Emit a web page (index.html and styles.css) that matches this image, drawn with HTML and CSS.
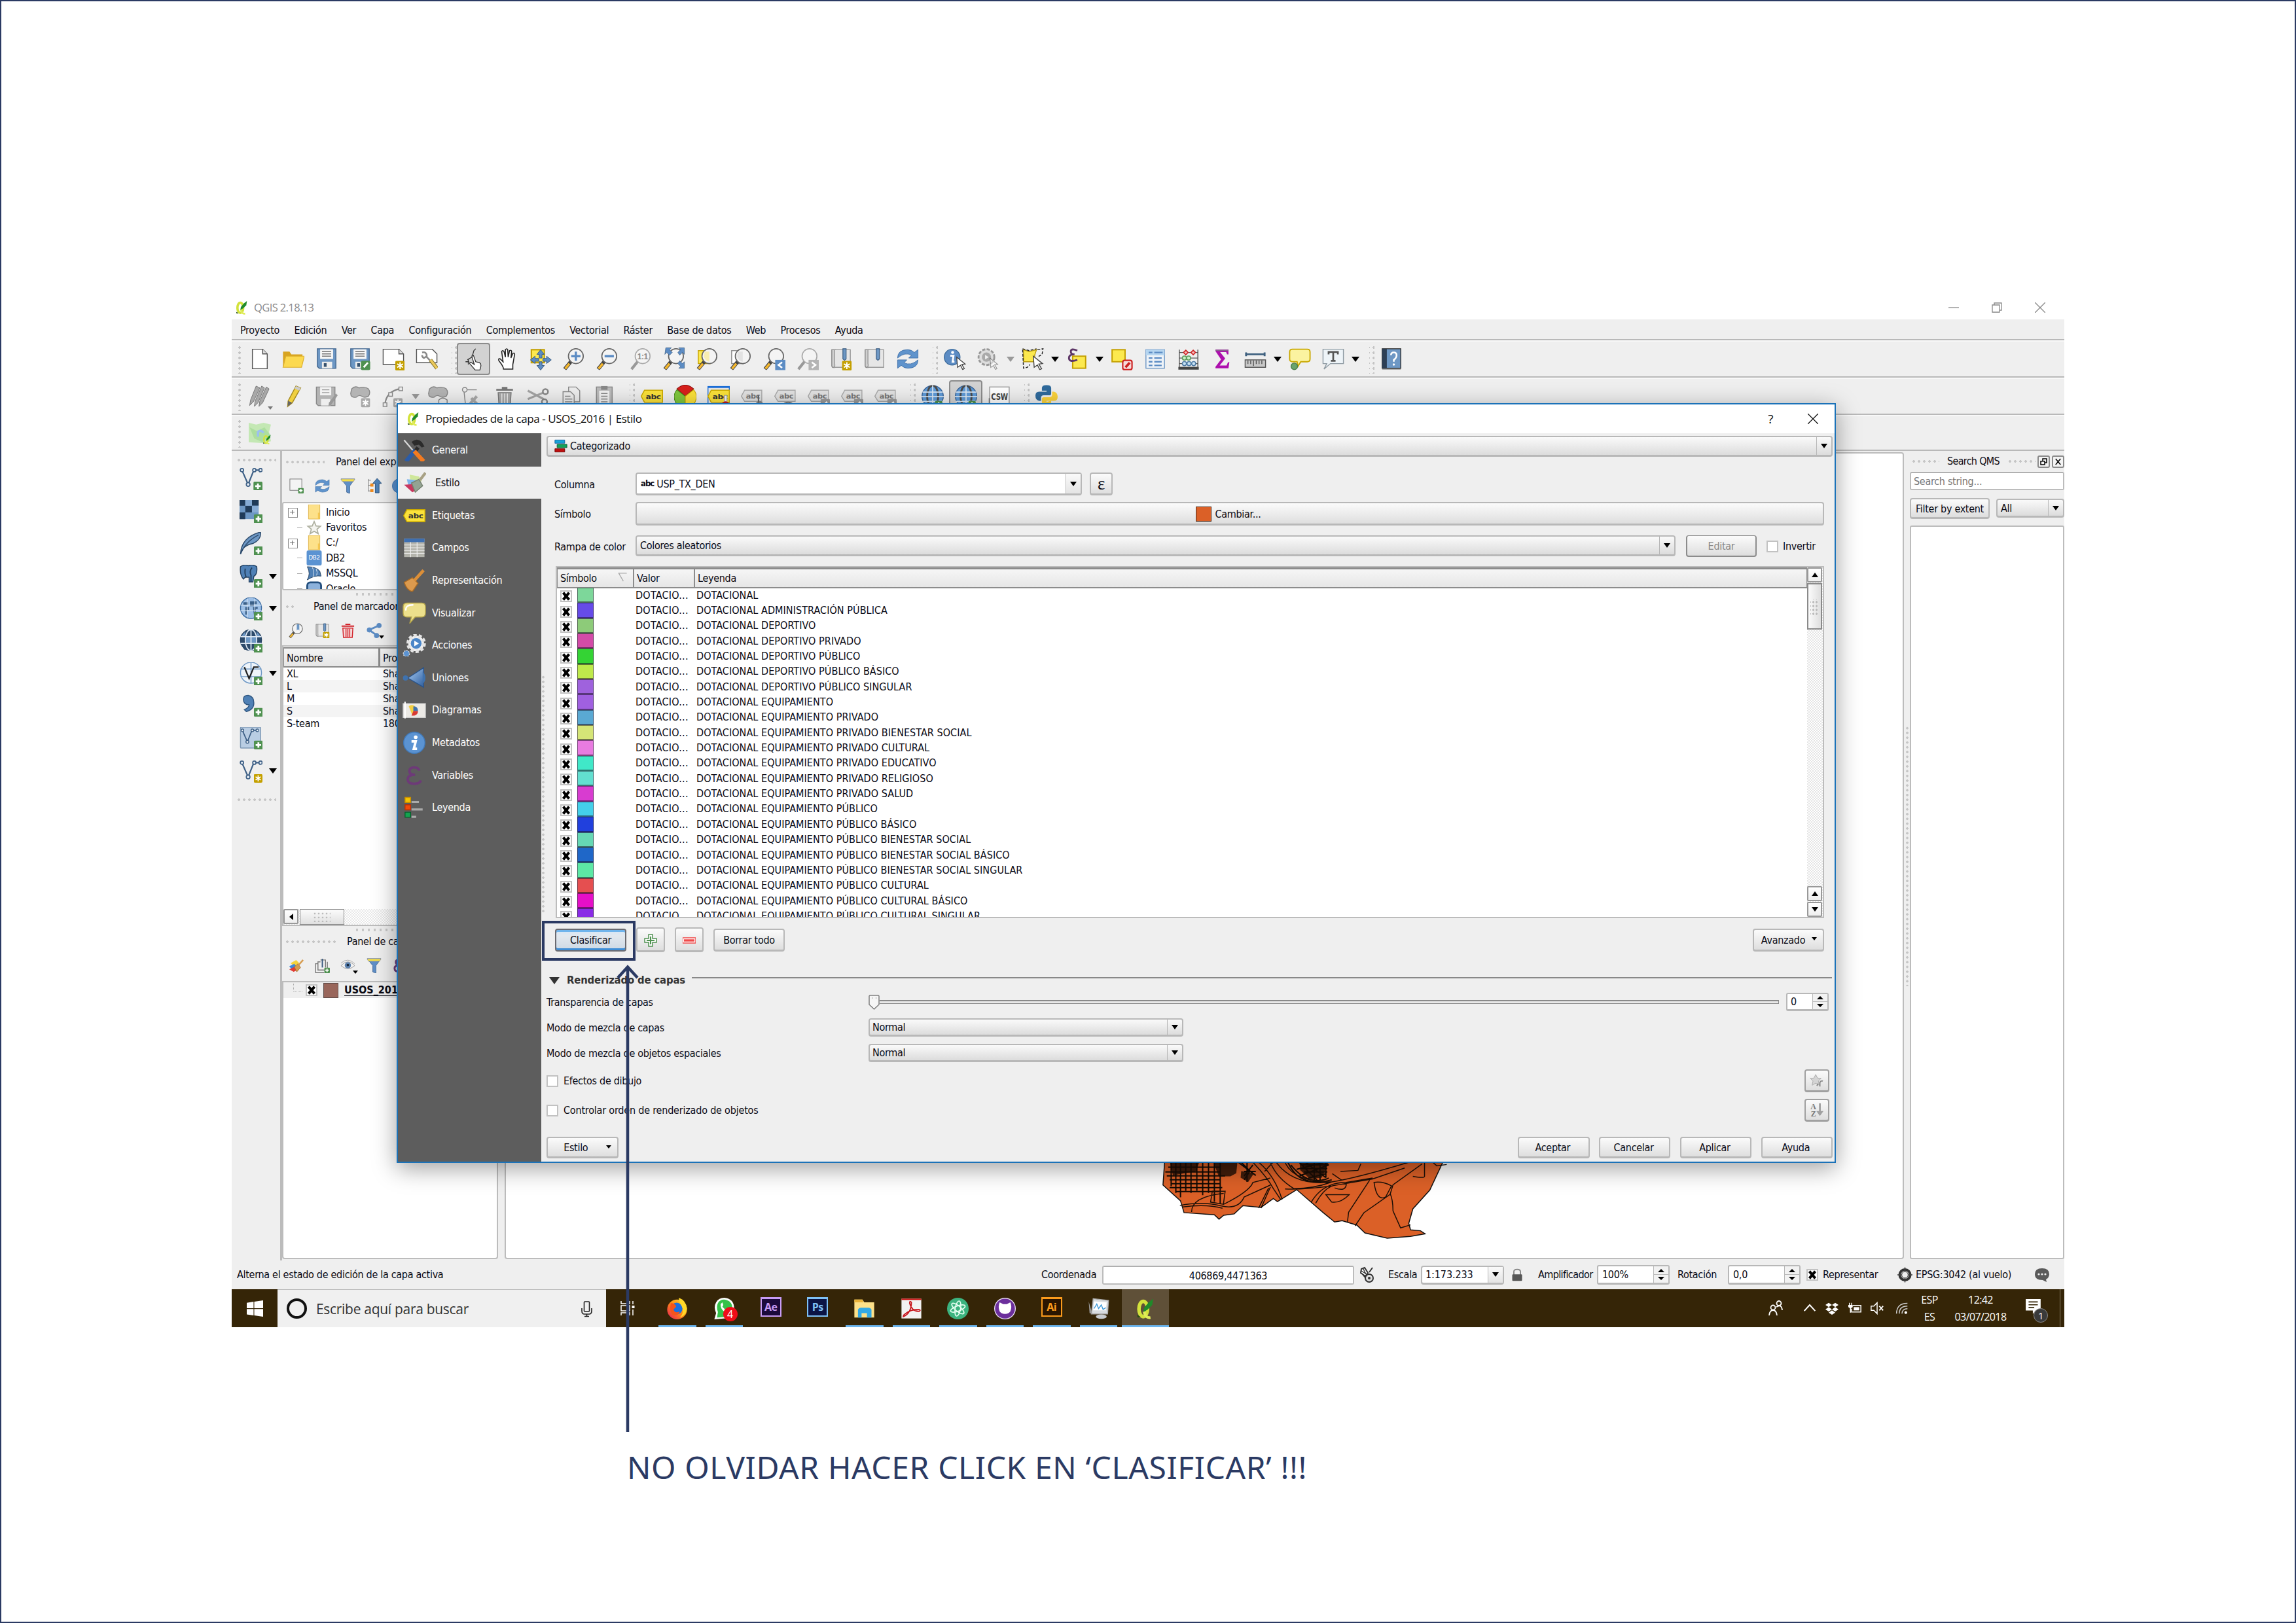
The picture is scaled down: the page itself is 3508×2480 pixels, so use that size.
FILE: index.html
```html
<!DOCTYPE html>
<html lang="es">
<head>
<meta charset="utf-8">
<title>QGIS 2.18.13</title>
<link rel="stylesheet" href="styles.css">
</head>
<body>
<svg class="defs" aria-hidden="true">
  <defs>
    <linearGradient id="g-blue" x1="0" y1="0" x2="1" y2="1"><stop offset="0" stop-color="#a9cdf5"/><stop offset="1" stop-color="#2f5f9e"/></linearGradient>
    <linearGradient id="g-fox" x1="1" y1="0" x2="0" y2="1"><stop offset="0" stop-color="#ffe32b"/><stop offset=".5" stop-color="#ff8a16"/><stop offset="1" stop-color="#e8175d"/></linearGradient>
  </defs>
  <symbol id="plus" viewBox="0 0 10 10"><rect width="10" height="10" rx="1.5" fill="#4f9150"/><path d="M5 2v6M2 5h6" stroke="#fff" stroke-width="2"/></symbol>
  <symbol id="star" viewBox="0 0 10 10"><rect width="10" height="10" rx="1.5" fill="#c4a000"/><path d="M5 1.5v7M2 3.2l6 3.6M8 3.2L2 6.8" stroke="#fff" stroke-width="1.3"/></symbol>
  <symbol id="gstar" viewBox="0 0 10 10"><rect width="10" height="10" rx="1.5" fill="#a8a8a8"/><path d="M5 1.5v7M2 3.2l6 3.6M8 3.2L2 6.8" stroke="#fff" stroke-width="1.3"/></symbol>
  <symbol id="qgis" viewBox="0 0 24 24"><ellipse cx="10" cy="12.500" rx="4.800" ry="8.500" fill="none" stroke="#d3e23c" stroke-width="4"/><path d="M11 15q1 8 7 7" fill="none" stroke="#e0ec5a" stroke-width="3"/><path d="M10 16l1-5 5-6 5-4-1 7-5 5z" fill="#1f8a2a"/><path d="M3 19l4 2-3 1z" fill="#234d10"/></symbol>
  <symbol id="new" viewBox="0 0 24 24"><path d="M4 1.5h11l5 5v16H4z" fill="#fff" stroke="#555"/><path d="M15 1.5v5h5" fill="#ddd" stroke="#555"/></symbol>
  <symbol id="open" viewBox="0 0 24 24"><path d="M1 21V4h7l2 3h12v3" fill="#d8a420"/><path d="M1 21L4 9h20l-3 12z" fill="#fcd94f" stroke="#dcae2b" stroke-width=".8"/></symbol>
  <symbol id="save" viewBox="0 0 24 24"><path d="M2 1h20v21H4l-2-2z" fill="#6d97c4" stroke="#466a92"/><path d="M5 1.5h14V12H5z" fill="#f7f7f7"/><path d="M7 4h10M7 6.5h10M7 9h10" stroke="#777"/><path d="M7 15h11v7H7z" fill="#eee"/><path d="M9 16.500h3v4H9z" fill="#36526f"/></symbol>
  <symbol id="saveas" viewBox="0 0 24 24"><use href="#save"/><rect x="13" y="14" width="10" height="10" rx="1.5" fill="#4f9150"/><path d="M16 21l4.500-5" stroke="#fff" stroke-width="2"/></symbol>
  <symbol id="composer" viewBox="0 0 24 24"><path d="M1 1.5h17l5 5V18H1z" fill="#fff" stroke="#555"/><path d="M18 1.5v5h5" fill="#ddd" stroke="#555"/><use href="#star" x="14" y="14" width="10.5" height="10.5"/></symbol>
  <symbol id="manager" viewBox="0 0 24 24"><path d="M1 1.5h17l5 5V16H1z" fill="#fff" stroke="#555"/><path d="M7 5q5-1 5 4l-3 2q-2-1-2-3M12 10l4 4" fill="none" stroke="#888" stroke-width="1.8"/><path d="M16 13l7 9" stroke="#8a7a30" stroke-width="4"/><path d="M16 13l7 9" stroke="#ecc95a" stroke-width="2.5"/></symbol>
  <symbol id="touch" viewBox="0 0 24 24"><path d="M10 9q0-2 1.500-1l2.500 7 4 1q2 1 1.500 4l-1 4h-5l-6-7q0-2 2-1l3 2-2.500-8z" fill="#fff" stroke="#333" stroke-width=".9"/><path d="M5 13l5-3 2-7 2-2M3 15h4M6 12v6" fill="none" stroke="#333" stroke-width=".9"/></symbol>
  <symbol id="hand" viewBox="0 0 24 24"><path d="M8 23q0-3-5-9-1-3 1.500-2l3 3L6 4q1-2 2.500 0l1.500 6V2q1.500-2 2.500 0l.5 8 1.500-7q2-1 2.200 1L16 11l2-5q2-1 2 1l-2 11v5z" fill="#fff" stroke="#222" stroke-width="1.1"/></symbol>
  <symbol id="pansel" viewBox="0 0 24 24"><rect x="2" y="2" width="14" height="14" fill="#fce94f" stroke="#c4a000" stroke-width="1.5"/><path d="M12 2l4 5h-2.500v4h-3V7H8zM12 24l4-5h-2.500v-4h-3v4H8zM1 13l5-4v2.500h4v3H6V17zM23.500 13l-5-4v2.500h-4v3h4V17z" fill="#5c8cc4" stroke="#37597f" stroke-width=".7"/></symbol>
  <symbol id="lens" viewBox="0 0 24 24"><path d="M8.500 15L2 23" stroke="#444" stroke-width="4"/><path d="M7 17l-4.500 5.500" stroke="#f5b82e" stroke-width="2.500"/><circle cx="14" cy="9" r="8" fill="#f4f4f4" stroke="#666" stroke-width="1.2"/></symbol>
  <symbol id="glens" viewBox="0 0 24 24"><path d="M8.500 15L2 23" stroke="#999" stroke-width="3"/><circle cx="14" cy="9" r="8" fill="#f4f4f4" stroke="#aaa" stroke-width="1.2"/></symbol>
  <symbol id="zin" viewBox="0 0 24 24"><use href="#lens"/><path d="M14 4v10M9 9h10" stroke="#5c8cc4" stroke-width="2.4"/></symbol>
  <symbol id="zout" viewBox="0 0 24 24"><use href="#lens"/><path d="M9 9h10" stroke="#5c8cc4" stroke-width="2.6"/></symbol>
  <symbol id="z11" viewBox="0 0 24 24"><use href="#glens"/><text x="14" y="12" font-size="8.5" text-anchor="middle" font-weight="bold" fill="#888" font-family="Liberation Sans, sans-serif">1:1</text></symbol>
  <symbol id="zfull" viewBox="0 0 24 24"><use href="#lens"/><path d="M3 0h6L7 2l3 3-3 3-3-3-2 2zM23 0v7l-2-2-3 3-2-3 3-3-2-2zM23 22v-7l-2 2-3-3-2 3 3 3-2 2z" fill="#5c8cc4" stroke="#37597f" stroke-width=".5"/></symbol>
  <symbol id="zsel" viewBox="0 0 24 24"><rect x="2" y="3" width="13" height="14" fill="#fce94f" stroke="#c4a000"/><use href="#lens"/><path d="M9 4h5v11q-5-1-6-6z" fill="#f7edb0"/></symbol>
  <symbol id="zlay" viewBox="0 0 24 24"><rect x="2" y="3" width="13" height="14" fill="#fff" stroke="#888"/><use href="#lens"/><path d="M9 4h5v11q-5-1-6-6z" fill="#e2e2e2"/></symbol>
  <symbol id="zlast" viewBox="0 0 24 24"><use href="#lens"/><rect x="13" y="13" width="11" height="11" fill="#5c8cc4"/><path d="M20.500 15.500l-4 3 4 3" fill="none" stroke="#fff" stroke-width="1.8"/></symbol>
  <symbol id="znext" viewBox="0 0 24 24"><use href="#glens"/><rect x="13" y="13" width="11" height="11" fill="#b4b4b4"/><path d="M16.500 15.500l4 3-4 3" fill="none" stroke="#fff" stroke-width="1.8"/></symbol>
  <symbol id="book" viewBox="0 0 24 24"><path d="M2 2h4v19q-4 1-4-2z" fill="#d0d0d0" stroke="#888"/><path d="M5 2h17v19H4q2-1 1-4z" fill="#e6e6e6" stroke="#999"/><path d="M14 1h3.500v11l-1.700 1.500L14 12z" fill="#6d97c4" stroke="#37597f" stroke-width=".8"/></symbol>
  <symbol id="booknew" viewBox="0 0 24 24"><use href="#book"/><use href="#star" x="13" y="14" width="10.5" height="10.5"/></symbol>
  <symbol id="refresh" viewBox="0 0 24 24"><path d="M1 11q0-9 11-9 4 0 7 3l4-3v9H13l3-3q-7-4-15 3zM23 13q0 9-11 9-4 0-7-3l-4 3v-9h10l-3 3q7 4 15-3z" fill="#5f93cc" stroke="#3a6ca5" stroke-width=".6"/></symbol>
  <symbol id="cursor" viewBox="0 0 12 16"><path d="M1 1l10 8-4 .5 3 5-2 1-2.500-5L2 13z" fill="#fff" stroke="#444"/></symbol>
  <symbol id="ident" viewBox="0 0 24 24"><circle cx="9" cy="10" r="8.5" fill="#5c8cc4" stroke="#42709f"/><circle cx="9.5" cy="5" r="1.6" fill="#fff"/><path d="M7 8.500h3.500l-1 6.500h2" fill="none" stroke="#fff" stroke-width="2"/><use href="#cursor" x="13" y="9" width="11" height="15"/></symbol>
  <symbol id="ggear" viewBox="0 0 24 24"><circle cx="10" cy="10" r="8.5" fill="#ddd" stroke="#999" stroke-width="2" stroke-dasharray="3.5 1.5"/><circle cx="10" cy="10" r="5" fill="#aaa"/><path d="M8.500 7.500l4 2.500-4 2.500z" fill="#eee"/><use href="#cursor" x="13" y="10" width="10" height="14" opacity=".5"/></symbol>
  <symbol id="select" viewBox="0 0 24 24"><path d="M2 2l6 2 8-2-2 6v7H2z" fill="#fce94f" stroke="#b89a10"/><path d="M1 1l7 2 8-2M17 2l6-1-1 6-5 3M1 2l1 20 4-1 3-3" fill="none" stroke="#222" stroke-dasharray="3 1.5"/><use href="#cursor" x="11" y="8" width="13" height="16"/></symbol>
  <symbol id="epssel" viewBox="0 0 24 24"><rect x="7" y="9" width="14" height="13" fill="#fce94f" stroke="#c4a000" stroke-width="1.4"/><path d="M12 3Q5 0 5 4q0 3 4 3-6 0-6 4 0 5 9 2" fill="none" stroke="#5c3566" stroke-width="2"/></symbol>
  <symbol id="desel" viewBox="0 0 24 24"><rect x="1.5" y="2" width="14" height="13" fill="#fce94f" stroke="#c4a000" stroke-width="1.4"/><rect x="13" y="13.5" width="10" height="10" rx="2" fill="#f6dada" stroke="#cc2020" stroke-width="1.5"/><path d="M16 21l4.500-5" stroke="#cc2020" stroke-width="2.6"/></symbol>
  <symbol id="attr" viewBox="0 0 24 24"><rect x="2" y="2" width="20" height="20" fill="#eef3f8" stroke="#6d97c4"/><path d="M2 2h20v6H2z" fill="#b5d5f0"/><path d="M5 5h4M11 5h9M5 11h4M11 11h8M5 15h4M11 15h8M5 19h4M11 19h8" stroke="#5c8cc4" stroke-width="1.6"/></symbol>
  <symbol id="abacus" viewBox="0 0 24 24"><path d="M2 22V2M22 22V2M2 5h20M2 11h20M2 17h20" stroke="#555" fill="none"/><path d="M1 22h22" stroke="#444" stroke-width="3"/><g stroke-width="1.1"><path d="M9 2.500l2.500 2.500L9 7.500 6.500 5zM17 2.500l2.500 2.500-2.500 2.500L14.500 5z" fill="#f6b8b8" stroke="#c22"/><g fill="#c8f0c8" stroke="#5a9a5a"><circle cx="7.5" cy="11" r="2.2"/><circle cx="12" cy="11" r="2.2"/></g><g fill="#c8e2f4" stroke="#4f7ba5"><circle cx="7.5" cy="17" r="2.2"/><circle cx="12.5" cy="17" r="2.2"/><circle cx="17.5" cy="17" r="2.2"/></g></g></symbol>
  <symbol id="sigma" viewBox="0 0 24 24"><path d="M5 2h14v5h-1.500l-1-2.500H10l5.500 7L9.500 19H17l1.500-3.500H20L19 22H5v-1.500l6-8-6-9z" fill="#ad0fad"/><path d="M5 2h14v1.500H5z" fill="#8b5f91"/></symbol>
  <symbol id="measure" viewBox="0 0 24 24"><path d="M2 5v4M22 5v4M2 7h20" stroke="#3e607f" stroke-width="2"/><rect x="1" y="13" width="22" height="8" fill="#c8c8c8" stroke="#555"/><path d="M4 13.500v4M7 13.500v4M10 13.500v6M13 13.500v4M16 13.500v4M19 13.500v4" stroke="#555"/></symbol>
  <symbol id="tip" viewBox="0 0 24 24"><path d="M4 1.500h16q3 0 3 3V12q0 3-3 3h-7l-3 5-1-5H4q-3 0-3-3V4.500q0-3 3-3z" fill="#fbf3a0" stroke="#c9a800" stroke-width="1.3"/><circle cx="6" cy="20" r="3.5" fill="#6ba36c" stroke="#4a7d4b"/></symbol>
  <symbol id="textann" viewBox="0 0 24 24"><path d="M1 1.500h22V17H9l-7 6 3-6H1z" fill="#eef4f8" stroke="#8f9ba3"/><path d="M7 7V4.500h10V7M12 4.500V14M9.500 14h5" fill="none" stroke="#555" stroke-width="1.9"/></symbol>
  <symbol id="help" viewBox="0 0 24 24"><path d="M2 22h20v1.500H2z" fill="#999"/><rect x="2" y="1" width="20" height="21" fill="#6d97c4" stroke="#333"/><path d="M2 1h5v21H2z" fill="#2d3f55"/><path d="M11.500 8q0-3 3-3t3 3-3 5v2" fill="none" stroke="#fff" stroke-width="1.8"/><circle cx="14.5" cy="18" r="1.2" fill="#fff"/></symbol>

  <symbol id="pencils" viewBox="0 0 24 24"><path d="M8 1L2 16l-1 6 4-4 7-15zM14 1L7 17l-1 6 4-4 7-16zM19 2l-7 15-1 6 4-4 7-15z" fill="#a8a8a8" stroke="#777" stroke-width=".7"/></symbol>
  <symbol id="pencil" viewBox="0 0 24 24"><path d="M15 1l5 2-9 16-5 4 .5-6z" fill="#f0d040" stroke="#a58a20"/><path d="M15 1l5 2-1.500 3-5-2.500z" fill="#ccc"/><path d="M6.500 17l4.500 2-5 4z" fill="#666"/></symbol>
  <symbol id="gsave" viewBox="0 0 24 24"><path d="M1 2h20v20H3l-2-2z" fill="#b4b4b4" stroke="#888"/><path d="M5 2h12v9H5z" fill="#f2f2f2"/><path d="M7 5h8M7 8h8" stroke="#999"/><path d="M6 15h10v7H6z" fill="#eee"/><path d="M22 9l2 2-7 10-3 2 .5-4z" fill="#999"/></symbol>
  <symbol id="gpoly" viewBox="0 0 24 24"><path d="M3 4q4-4 8-1 6-2 10 1 3 4 0 8-4 2-7 0-3-2-6 1Q2 14 2 9z" fill="#b4b4b4" stroke="#888"/><use href="#gstar" x="13" y="14" width="10" height="10"/></symbol>
  <symbol id="gnode" viewBox="0 0 24 24"><path d="M3 21Q4 7 19 4" fill="none" stroke="#888" stroke-width="1.5"/><path d="M1 19h4v4H1zM7 8h4v4H7zM18 2h4v4h-4z" fill="#eee" stroke="#888"/><use href="#gstar" x="12" y="14" width="10" height="10"/></symbol>
  <symbol id="gmove" viewBox="0 0 24 24"><path d="M3 4q4-4 8-1 6-2 10 1 3 4 0 8-4 2-7 0-3-2-6 1Q2 14 2 9z" fill="#b4b4b4" stroke="#888"/><path d="M13 23v-7q4-4 9 0v7z" fill="#eee" stroke="#888"/></symbol>
  <symbol id="gedit" viewBox="0 0 24 24"><path d="M4 5l2 18M6 5h12" stroke="#888" fill="none"/><circle cx="5" cy="5" r="2.5" fill="#eee" stroke="#888"/><path d="M9 22l9-10M12 14l8 8" stroke="#aaa" stroke-width="3"/></symbol>
  <symbol id="gtrash" viewBox="0 0 24 24"><path d="M3 5h18M9 3h6" stroke="#777" stroke-width="2"/><path d="M5 8h14l-1 15H6z" fill="#aaa" stroke="#777"/><path d="M9 9v13M12 9v13M15 9v13" stroke="#eee"/></symbol>
  <symbol id="gcut" viewBox="0 0 24 24"><path d="M1 6l17 9M1 15l17-7" stroke="#a4a4a4" stroke-width="2.2"/><circle cx="20" cy="7" r="2.8" fill="none" stroke="#888" stroke-width="1.8"/><circle cx="19" cy="18" r="2.8" fill="none" stroke="#888" stroke-width="1.8"/></symbol>
  <symbol id="gcopy" viewBox="0 0 24 24"><path d="M9 2h8l4 4v12H9z" fill="#eee" stroke="#888"/><path d="M3 7h8l4 4v12H3z" fill="#eee" stroke="#888"/><path d="M5 12h6M5 15h8M5 18h8M5 21h8" stroke="#888"/></symbol>
  <symbol id="gpaste" viewBox="0 0 24 24"><rect x="3" y="2" width="17" height="21" fill="#bbb" stroke="#888"/><path d="M6 6h11v15H6z" fill="#f2f2f2"/><path d="M8 1h7v4H8z" fill="#888"/><path d="M8 9h7M8 12h7M8 15h7M8 18h7" stroke="#888"/></symbol>
  <symbol id="tag" viewBox="0 0 24 24"><path d="M4 5.500h19.500v13H4l-3.500-6.500z" fill="#fbe23a" stroke="#c9a800"/><text x="13.5" y="15" font-size="8" font-weight="bold" text-anchor="middle" fill="#333" font-family="DejaVu Sans, sans-serif" textLength="16" lengthAdjust="spacingAndGlyphs">abc</text></symbol>
  <symbol id="gtag" viewBox="0 0 24 24"><path d="M4 5.500h18.500v12H4L.5 12z" fill="#e2e2e2" stroke="#aaa"/><text x="13" y="14.500" font-size="8" font-weight="bold" text-anchor="middle" fill="#777" font-family="DejaVu Sans, sans-serif" textLength="15" lengthAdjust="spacingAndGlyphs">abc</text></symbol>
  <symbol id="gt-pin" viewBox="0 0 24 24"><use href="#gtag"/><circle cx="20" cy="21" r="4" fill="#888"/><path d="M19 11v8" stroke="#666" stroke-width="1.5"/></symbol>
  <symbol id="gt-eye" viewBox="0 0 24 24"><use href="#gtag"/><path d="M8 22q7-7 14 0" fill="#eee" stroke="#777" stroke-width="1.5"/><circle cx="15" cy="22" r="2.5" fill="#777"/></symbol>
  <symbol id="gt-edit" viewBox="0 0 24 24"><use href="#gtag"/><rect x="14" y="15" width="10" height="9" rx="1" fill="#999"/><path d="M17 22l4-4" stroke="#fff" stroke-width="2"/></symbol>
  <symbol id="tagpin" viewBox="0 0 24 24"><rect x="0" y="2" width="24" height="24" fill="#e6e6e6" stroke="#1b6ed8" stroke-width="2"/><use href="#tag"/><path d="M18 11h3v8h-3z" fill="#f4f4f4" stroke="#888" stroke-width=".6"/><circle cx="19.5" cy="22" r="4.5" fill="#c01c1c"/></symbol>
  <symbol id="pie" viewBox="0 0 24 24"><path d="M12 12L3 4q9-8 18 0z" fill="#d8201c" stroke="#901010" stroke-width=".8"/><path d="M12 12v12Q1 24 0 13q0-5 3-8z" fill="#7ec83c" stroke="#4a8a20" stroke-width=".8"/><path d="M12 12v12q11 0 12-11 0-5-3-8z" fill="#fbe23a" stroke="#c9a800" stroke-width=".8"/></symbol>
  <symbol id="globe" viewBox="0 0 24 24"><circle cx="12" cy="12" r="11.5" fill="#5f9bd8" stroke="#3a6496"/><ellipse cx="12" cy="12" rx="6" ry="11.5" fill="none" stroke="#4b4b4b" stroke-width="2"/><path d="M12 0v24M1 7.500h22M0 12.500h24M1 17.500h22" stroke="#dce8f4" stroke-width="1.2"/></symbol>
  <symbol id="globeadd" viewBox="0 0 24 24"><use href="#globe"/><use href="#plus" x="14.5" y="17" width="8" height="8"/></symbol>
  <symbol id="csw" viewBox="0 0 24 24"><rect x="1.5" y="2" width="21" height="20" fill="#fff" stroke="#999"/><path d="M1 14v8" stroke="#777"/><text x="12" y="16" font-size="10" font-weight="bold" text-anchor="middle" fill="#444" font-family="DejaVu Sans, sans-serif" textLength="18" lengthAdjust="spacingAndGlyphs">CSW</text></symbol>
  <symbol id="python" viewBox="0 0 24 24"><path d="M7 6V3q0-3 5-3t5 3v6q0 2-2 2H9q-3 0-3 3v3H4q-4-1-4-5.500T4 7h8V6z" fill="#2f6a9c"/><path d="M17 17v4q0 3-5 3t-5-3v-6q0-2 2-2h6q3 0 3-3V7h2q4 1 4 5.500T20 17h-8v1z" fill="#fbd33b"/></symbol>
  <symbol id="qmap" viewBox="0 0 24 24"><path d="M0 1l8 2 8-2 8 2-2 8 2 10-10 2-14-1z" fill="#c4e8b4"/><path d="M1 6l8 4 8-4 6 8-8 8-9-4z" fill="#a4da96" opacity=".7"/><path d="M10 16v-5q3-3 6 1" fill="none" stroke="#9cc1f0" stroke-width="2.5"/><use href="#qgis" x="14" y="13" width="11" height="12"/></symbol>

  <symbol id="v" viewBox="0 0 24 24"><path d="M2 2l7 16L15 3h7" fill="none" stroke="#3d5f85" stroke-width="1.5"/><g fill="#e8eef5" stroke="#3d5f85" stroke-width="1.2"><circle cx="2.5" cy="3" r="1.7"/><circle cx="9" cy="18" r="1.9"/><circle cx="15.5" cy="3" r="1.7"/><circle cx="22" cy="3" r="1.7"/></g></symbol>
  <symbol id="vadd" viewBox="0 0 24 24"><use href="#v"/><use href="#plus" x="14.5" y="15" width="9.5" height="9.5"/></symbol>
  <symbol id="vnew" viewBox="0 0 24 24"><use href="#v"/><use href="#star" x="15" y="15" width="9" height="9"/></symbol>
  <symbol id="raster" viewBox="0 0 24 24"><path d="M0 0h20v20H0z" fill="#6d97c4"/><path d="M0 0h6v6H0zM13 0h7v6h-7zM6 6h7v7H6zM0 13h6v7H0z" fill="#1f3a58"/><path d="M6 0h7v6H6zM13 6h7v7h-7z" fill="#86abd4"/><use href="#plus" x="15" y="15" width="9.5" height="9.5"/></symbol>
  <symbol id="feather" viewBox="0 0 24 24"><path d="M1 23Q2 5 22 0q1 8-8 12-6 1-10 5z" fill="#6d97c4" stroke="#2c4a6b"/><path d="M1 23Q6 10 20 3" fill="none" stroke="#2c4a6b"/><use href="#plus" x="15" y="15" width="9.5" height="9.5"/></symbol>
  <symbol id="pg" viewBox="0 0 24 24"><path d="M1 2q4-3 8-1 5-2 9 1 1 8-3 10l-1 6h-4v-5H6L4 15Q0 10 1 2z" fill="#4f80b5" stroke="#24405f"/><path d="M6 4q-1 5 1 9M13 3q-3 4-1 8v7" fill="none" stroke="#24405f" stroke-width="1.3"/><use href="#plus" x="15" y="15" width="9.5" height="9.5"/></symbol>
  <symbol id="wms" viewBox="0 0 24 24"><circle cx="12" cy="11" r="11" fill="#9dbfe6" stroke="#3d6da3"/><path d="M4 5h5v3H4zM11 4h7v3h-3v2h-4zM6 10h4v3H8v5H6zM14 10h5v2h-2v6h-2z" fill="#3a5f88"/><path d="M1 8h22M1 14h22M8 1v20M16 1v20" stroke="#dbe8f5" stroke-width=".8"/><use href="#plus" x="15" y="15" width="9.5" height="9.5"/></symbol>
  <symbol id="wcs" viewBox="0 0 24 24"><circle cx="12" cy="11" r="11" fill="#6d97c4" stroke="#24405f"/><path d="M6 1h12v6H6zM1 15h22l-4 6H5zM1 8h5v6H1zM18 8h5v6h-5z" fill="#2c4a6b"/><path d="M12 0v22M1 7.500h22M1 14.500h22" stroke="#dfe9f4" stroke-width="1.2"/><ellipse cx="12" cy="11" rx="6" ry="11" fill="none" stroke="#dfe9f4" stroke-width="1.2"/><use href="#plus" x="15" y="15" width="9.5" height="9.5"/></symbol>
  <symbol id="wfs" viewBox="0 0 24 24"><circle cx="12" cy="11" r="11" fill="#eef4fa" stroke="#6d97c4"/><path d="M1 7h22M1 15h22M12 0v22" stroke="#6d97c4"/><path d="M5 5l5 12 5-12h5" fill="none" stroke="#222" stroke-width="1.5"/><use href="#plus" x="15" y="15" width="9.5" height="9.5"/></symbol>
  <symbol id="comma" viewBox="0 0 24 24"><path d="M4 5q0-4 5-4 6 1 6 8t-8 9l-2-2q5-2 5-5-6 0-6-6z" fill="#4f80b5" stroke="#2f5680"/><use href="#plus" x="15" y="14" width="9.5" height="9.5"/></symbol>
  <symbol id="virt" viewBox="0 0 24 24"><rect x="1" y="0" width="21" height="22" rx="1" fill="#b9cde3" stroke="#7d98b5"/><g transform="translate(1 1) scale(.8)"><use href="#v" width="24" height="24"/></g><use href="#plus" x="15" y="14" width="9.5" height="9.5"/></symbol>

  <symbol id="boxadd" viewBox="0 0 24 24"><rect x="2" y="1" width="19" height="18" fill="#f4f4f4" stroke="#777"/><use href="#plus" x="15" y="15" width="9" height="9"/></symbol>
  <symbol id="funnel" viewBox="0 0 24 24"><path d="M1 1h22l-8 11v12l-5-2V12z" fill="#5f8fc7" stroke="#4a6f9b"/><path d="M1 1h22l-2 4H3z" fill="#f5e04a" stroke="#999" stroke-width=".8"/></symbol>
  <symbol id="collapse" viewBox="0 0 24 24"><path d="M3 1v20M3 3h4M3 11h4M3 20h4" stroke="#777" fill="none"/><path d="M6 8h5v5H6zM6 17h5v5H6z" fill="#f08a1c"/><path d="M17 0l7 8h-4v15h-6V8h-4z" fill="#4f80b5" stroke="#2f5680"/></symbol>
  <symbol id="info" viewBox="0 0 24 24"><circle cx="12" cy="12" r="11.5" fill="#5b93d2" stroke="#4179b8"/><circle cx="13.5" cy="6" r="2" fill="#fff"/><path d="M9 10.500h4.500l-2 8H15" fill="none" stroke="#fff" stroke-width="2.7"/></symbol>
  <symbol id="folder" viewBox="0 0 24 24"><path d="M3 0h18v23H3z" fill="#fde18a" stroke="#e0b64c"/><path d="M18 13h2.500v10H18z" fill="#f7c84f"/></symbol>
  <symbol id="fav" viewBox="0 0 24 24"><path d="M12 2l3 7 7 .5-5.500 4.700 2 7.300-6.500-4-6.500 4 2-7.300L2 9.500 9 9z" fill="#f4f4f0" stroke="#aeb0a0" stroke-width="1.8"/></symbol>
  <symbol id="db2" viewBox="0 0 24 24"><rect width="24" height="24" rx="3" fill="#5b93d2"/><text x="12" y="15" font-size="9" text-anchor="middle" fill="#fff" font-family="DejaVu Sans, sans-serif">DB2</text></symbol>
  <symbol id="mssql" viewBox="0 0 24 24"><path d="M1 1q14 0 20 7l2 8q-10-2-22 6 6-10 0-21z" fill="#4f80b5" stroke="#24405f"/><path d="M9 2q4 7 1 16M15 4q3 6 1 11" stroke="#dce8f4" fill="none"/></symbol>
  <symbol id="oracle" viewBox="0 0 24 24"><rect x="1" y="2" width="22" height="20" rx="5" fill="#8db2dc" stroke="#24507f" stroke-width="3"/></symbol>
  <symbol id="zbook" viewBox="0 0 24 24"><use href="#lens"/><path d="M13 2h4v10l-2-2-2 2z" fill="#6d97c4"/></symbol>
  <symbol id="rtrash" viewBox="0 0 24 24"><path d="M2 5h20M8 2h8" stroke="#d2232a" stroke-width="2"/><path d="M4 8h16l-1 15H5z" fill="#f6dada" stroke="#d2232a" stroke-width="1.5"/><path d="M9 9v13M12 9v13M15 9v13" stroke="#d2232a" stroke-width="1.5"/></symbol>
  <symbol id="share" viewBox="0 0 24 24"><path d="M20 4L4 11l13 9" fill="none" stroke="#5c8cc4" stroke-width="3"/><circle cx="20" cy="4" r="4" fill="#5c8cc4"/><circle cx="4.5" cy="11" r="4" fill="#5c8cc4"/><circle cx="16" cy="20" r="4" fill="#5c8cc4"/></symbol>
  <symbol id="brush3" viewBox="0 0 24 24"><path d="M3 8l9-5 5 5-8 5z" fill="#f5d33c"/><path d="M1 13l8-4 4 5-8 4z" fill="#3f86d8"/><path d="M1 18l8-4 5 5-6 3z" fill="#e23b34"/><path d="M9 14l6-5 4 6-6 7z" fill="#d69b4e" stroke="#9b6a2a" stroke-width=".8"/><path d="M16 11l7-8" stroke="#d69b4e" stroke-width="2.6"/></symbol>
  <symbol id="addgrp" viewBox="0 0 24 24"><path d="M5 9H1v14h14M9 6H5v13h15V6M9 3h8v12" fill="none" stroke="#777" stroke-width="1.5"/><path d="M12 1v14" stroke="#37597f" stroke-width="2"/><use href="#plus" x="15" y="15" width="9" height="9"/></symbol>
  <symbol id="eye" viewBox="0 0 24 24"><path d="M1 12Q12 0 23 12 12 22 1 12z" fill="#f4f4f4" stroke="#9a9a9a"/><path d="M1 8q11-10 22 1" fill="none" stroke="#aaa"/><circle cx="12" cy="11.5" r="5" fill="#5b80ad"/><circle cx="12" cy="11" r="2" fill="#16283c"/></symbol>
  <symbol id="eps" viewBox="0 0 24 24"><path d="M18 6q-1-4-6-4-6 0-6 4.500Q6 11 13 11q-9 0-9 5.500 0 5.500 8 5.500 7 0 8-4" fill="none" stroke="#6d3a78" stroke-width="3"/></symbol>

  <symbol id="tools" viewBox="0 0 24 24"><path d="M1 1l12 14" stroke="#d8d8d8" stroke-width="1.6"/><path d="M9 3q6-5 11 0l3 5-3 1-3-3-5 1z" fill="#2b2b2b"/><path d="M16 9l-3 4" stroke="#2b2b2b" stroke-width="4"/><path d="M13 12L3 24" stroke="#2b5ca8" stroke-width="4.5"/><path d="M12 13l10 11" stroke="#f47b20" stroke-width="4.5"/></symbol>
  <symbol id="style" viewBox="0 0 24 24"><path d="M7 3l10 2 3 5-12 3z" fill="#cfe79a"/><path d="M4 8l11 1 3 5-12 3z" fill="#7eb6ec"/><path d="M1 14l12-1 4 5-7 4z" fill="#c8375f"/><path d="M9 12l8-4 4 7-8 7z" fill="#93a393" stroke="#75806f"/><path d="M18 9l6-8" stroke="#a8a184" stroke-width="3"/></symbol>
  <symbol id="fields" viewBox="0 0 24 24"><path d="M1 2h22v20H1z" fill="#b4b4ac"/><path d="M1 2h22v4H1z" fill="#3e6fb0"/><path d="M1 9h22M1 12h22M1 15h22M1 18h22" stroke="#f0f0f0" stroke-width=".8"/><path d="M8 6v16M15 6v16" stroke="#f0f0f0" stroke-width=".8"/></symbol>
  <symbol id="brush" viewBox="0 0 24 24"><path d="M1 14l9-5 6 6-6 9q-6-1-9-10z" fill="#dc9a4e" stroke="#a86a24"/><path d="M12 12L22 1" stroke="#dc8f38" stroke-width="3.4"/></symbol>
  <symbol id="bubble" viewBox="0 0 24 24"><path d="M4 1h16q4 0 4 4v7q0 4-4 4h-7l-6 7 2-7H4q-4 0-4-4V5q0-4 4-4z" fill="#ece08c" stroke="#b7a74c"/><path d="M3 9q-1-6 8-6" fill="none" stroke="#fff" stroke-width="1.6"/></symbol>
  <symbol id="actions" viewBox="0 0 24 24"><circle cx="14" cy="10" r="8.5" fill="#f2f2f2" stroke="#e4e4e4" stroke-width="4" stroke-dasharray="3.3 2"/><circle cx="14" cy="10" r="5.8" fill="#4a86c8"/><path d="M12 7l5 3-5 3z" fill="#fff"/><circle cx="3.5" cy="21" r="3.3" fill="#5b93d2" stroke="#ddd" stroke-dasharray="1.5 1"/></symbol>
  <symbol id="joins" viewBox="0 0 24 24"><path d="M5 12L22 1v21z" fill="url(#g-blue)" stroke="#2c5488"/><path d="M21 5q3 3 3 7t-3 6" fill="#3f72ae"/><circle cx="2.5" cy="12" r="2.8" fill="#3f72ae"/></symbol>
  <symbol id="diag" viewBox="0 0 24 24"><path d="M0 5h24v15H0z" fill="#eceae6" stroke="#cfcfcf"/><path d="M2 3v18" stroke="#fff" stroke-width="1.5"/><path d="M6 8q3-3 7 0v8l-3 2z" fill="#f3cf45"/><path d="M11 8q5 0 5 5h-5z" fill="#3f72ae"/><path d="M9 18l2-5h5q0 4-4 5z" fill="#d83a34"/></symbol>
  <symbol id="legend" viewBox="0 0 24 24"><path d="M2 1h6v5.500H2z" fill="#f5c400" stroke="#c78d00"/><path d="M2 9h6v5.500H2z" fill="#f04a0a" stroke="#b83208"/><path d="M2 17h6v5.500H2z" fill="#14a350" stroke="#07602c"/><path d="M9 6h8M9 14h12M9 22h5" stroke="#aaa" stroke-width="2.2"/></symbol>
  <symbol id="catg" viewBox="0 0 24 24"><path d="M1 1h18v6H1z" fill="#17a3d8" stroke="#0d5a9b"/><path d="M5 9h18v6H5z" fill="#0fa35a" stroke="#06502b"/><path d="M1 17h18v6H1z" fill="#c00f0f" stroke="#600"/></symbol>
  <symbol id="gfav" viewBox="0 0 24 24"><path d="M10 2l3 6 6 .5-4.500 4.500 1.500 7-6-3.500L4 20l1.500-7L1 8.500 7 8z" fill="#d4d4d4" stroke="#aaa"/><path d="M17 22v-7q2-3 5-2M12 21l2-4" stroke="#888" fill="none" stroke-width="2"/></symbol>
  <symbol id="gsort" viewBox="0 0 24 24"><text x="6" y="11" font-size="13" font-weight="bold" text-anchor="middle" fill="#777" font-family="Liberation Serif, serif">A</text><text x="6" y="23" font-size="13" font-weight="bold" text-anchor="middle" fill="#777" font-family="Liberation Serif, serif">Z</text><path d="M17 1v19" stroke="#a0a0a0" stroke-width="3"/><path d="M11 14h12l-6 8z" fill="#a0a0a0"/></symbol>

  <symbol id="win" viewBox="0 0 24 24"><path d="M0 3.500l10-1.500v9.500H0zM11 1.900L24 0v11.500H11zM0 12.700h10V22L0 20.600zM11 12.700h13V24l-13-1.900z" fill="#fff"/></symbol>
  <symbol id="mic" viewBox="0 0 24 24"><rect x="8.5" y="1" width="8" height="15" rx="1" fill="none" stroke="#222" stroke-width="1.6"/><path d="M5 11v4q0 5 4 5h7q4 0 4-5v-4M12.500 20v3M9 23.500h7" fill="none" stroke="#222" stroke-width="1.6"/></symbol>
  <symbol id="tview" viewBox="0 0 24 24"><path d="M2 1v4h13V1M2 23v-4h13v4M2 8h13v8H2zM20 1v5M20 14v9" fill="none" stroke="#fff" stroke-width="1.5"/><path d="M18.500 8h4v4h-4z" fill="#fff"/></symbol>
  <symbol id="fox" viewBox="0 0 24 24"><circle cx="12" cy="13" r="11" fill="url(#g-fox)"/><circle cx="11.5" cy="12" r="6.5" fill="#1c6fe0"/><path d="M5 6q5 0 6 4l-3 3q2 5 7 2-2 6-8 4-4-4-2-13z" fill="#f5541c"/><path d="M14 0q8 3 9 12-1 8-8 10 6-6 2-13-3-4-3-9z" fill="#ffd829"/></symbol>
  <symbol id="wa" viewBox="0 0 24 24"><path d="M12 0q11 1 11 12T11 23l-10 1 2-7Q0 10 3 5t9-5z" fill="#fff"/><path d="M12 2q9 1 9 10t-9 9.500L4 22l1-6Q3 10 5 6t7-4z" fill="#35c24a"/><path d="M8 7q0 9 9 9l1-3-3-1-2 1-3-3 1-2-1-3z" fill="#fff"/></symbol>
  <symbol id="exp" viewBox="0 0 24 24"><path d="M1 2h9l2 3h11v17H1z" fill="#fde18a"/><path d="M1 2h9l1 3H1z" fill="#e8b23a"/><path d="M5 22v-9q1-2 3-2h9q2 0 3 2v9h-5v-5H9v5z" fill="#33a9e6"/></symbol>
  <symbol id="pdf" viewBox="0 0 24 24"><path d="M1 1h22v22H1z" fill="#f2f2f2"/><path d="M1 1h22v1.500H1z" fill="#c11"/><path d="M3 21q9-4 9-16-2-2-2 1 3 10 11 9 2-2-2-2-8 0-14 5-2 1-2 3z" fill="none" stroke="#c8171e" stroke-width="1.3"/></symbol>
  <symbol id="atom" viewBox="0 0 24 24"><circle cx="12" cy="12" r="12" fill="#3cb37f"/><g fill="none" stroke="#e6fff2" stroke-width="1.2"><ellipse cx="12" cy="12" rx="3" ry="8.5" transform="rotate(10 12 12)"/><ellipse cx="12" cy="12" rx="3" ry="8.5" transform="rotate(70 12 12)"/><ellipse cx="12" cy="12" rx="3" ry="8.5" transform="rotate(130 12 12)"/></g></symbol>
  <symbol id="gh" viewBox="0 0 24 24"><circle cx="12" cy="12" r="11.5" fill="#6c2f9c" stroke="#e4d8ee"/><path d="M6 5l4 2h4l4-2q2 5 0 10-2 3-6 3t-6-3Q4 10 6 5z" fill="#fff"/></symbol>
  <symbol id="mon" viewBox="0 0 24 24"><path d="M6 1l17 2-1 15H4z" fill="#d8dcdf" stroke="#aaa"/><path d="M1 4l4 14-3-1z" fill="#999"/><path d="M7 4l14 1-1 9H6z" fill="#fff"/><path d="M7 12l3-5 2 5 3-4 2 5 3-2" fill="none" stroke="#3f9ad8"/><ellipse cx="15" cy="21" rx="6" ry="2.5" fill="#c8ccd0"/></symbol>
  <symbol id="people" viewBox="0 0 24 24"><g fill="none" stroke="#fff" stroke-width="1.8"><circle cx="8" cy="11" r="3.5"/><path d="M2 23q1-8 6-8t6 8"/><circle cx="17" cy="4.5" r="3.5"/><path d="M13 10q8-5 9 5"/></g></symbol>
  <symbol id="chev" viewBox="0 0 24 24"><path d="M2 17l10-11 10 11" fill="none" stroke="#fff" stroke-width="2.4"/></symbol>
  <symbol id="dbx" viewBox="0 0 24 24"><path d="M6 2l6 4-6 4-6-4zM18 2l6 4-6 4-6-4zM6 10l6 4-6 4-6-4zM18 10l6 4-6 4-6-4zM12 16l6 4-6 4-6-4z" fill="#fff"/></symbol>
  <symbol id="bat" viewBox="0 0 24 24"><path d="M8 7h15v12H6v-6" fill="none" stroke="#fff" stroke-width="1.8"/><path d="M10 10h10v6H10z" fill="#fff"/><path d="M2 2v4M6 2v4" stroke="#fff" stroke-width="1.6"/><path d="M0 6h8v4l-3 2v8H3v-8l-3-2z" fill="#fff"/></symbol>
  <symbol id="vol" viewBox="0 0 24 24"><path d="M1 8h5l6-6v20l-6-6H1z" fill="none" stroke="#fff" stroke-width="1.8"/><path d="M16 8l7 8M23 8l-7 8" stroke="#fff" stroke-width="2.2"/></symbol>
  <symbol id="wifi" viewBox="0 0 24 24"><g fill="none" stroke="#ccc" stroke-width="1.8"><path d="M2 22Q2 3 22 3"/><path d="M7 22Q7 8 22 8"/><path d="M12 22q0-9 10-9"/></g><circle cx="19" cy="20" r="2.5" fill="#fff"/></symbol>
  <symbol id="sat" viewBox="0 0 24 24"><path d="M3 3l5-2 5 8-4 5-7-5zM4 10l8 10M20 1l-5 7" fill="#fff" stroke="#333" stroke-width="2"/><path d="M6 3l4 8M3 6l8 5" stroke="#333" stroke-width="1.4"/><circle cx="15" cy="17" r="6" fill="#ddd" stroke="#333" stroke-width="2"/><circle cx="15" cy="17" r="2" fill="#333"/></symbol>
  <symbol id="lock" viewBox="0 0 24 24"><path d="M6 12V6q0-4 6-4t6 4v6" fill="none" stroke="#8a8a8a" stroke-width="2.4"/><rect x="3" y="11" width="18" height="12" rx="1.5" fill="#555"/></symbol>
  <symbol id="crs" viewBox="0 0 24 24"><circle cx="12" cy="12" r="8.5" fill="#aaa" stroke="#333" stroke-width="4"/><circle cx="12" cy="12" r="5" fill="#eee" stroke="#555"/><path d="M12 0v7M12 17v7M0 12h7M17 12h7" stroke="#444" stroke-width="1.6"/></symbol>
  <symbol id="msg" viewBox="0 0 24 24"><path d="M12 2q11 0 11 9 0 5-5 8l1 4-6-3Q1 20 1 11q0-9 11-9z" fill="#5a5a5a"/><g fill="#eee"><circle cx="7" cy="11" r="1.6"/><circle cx="12" cy="11" r="1.6"/><circle cx="17" cy="11" r="1.6"/></g></symbol>
  <symbol id="notif" viewBox="0 0 24 24"><path d="M1 1h21v16h-7l-4 5v-5H1z" fill="#fff"/><path d="M5 5h13M5 9h13M5 13h8" stroke="#352507" stroke-width="1.5"/></symbol>
</svg>

<main class="sheet">
  <div class="screen">
    <header class="titlebar">
      <svg class="i24"><use href="#qgis"/></svg><span>QGIS 2.18.13</span>
      <div class="wincontrols">
        <svg viewBox="0 0 16 16"><path d="M0 8h16"/></svg>
        <svg viewBox="0 0 16 16"><path d="M1 4h11v11H1zM4 4V1h11v11h-3"/></svg>
        <svg viewBox="0 0 16 16"><path d="M0 0l16 16M16 0L0 16"/></svg>
      </div>
    </header>
    <nav class="menubar">
      <span>Proyecto</span><span>Edición</span><span>Ver</span><span>Capa</span><span>Configuración</span><span>Complementos</span><span>Vectorial</span><span>Ráster</span><span>Base de datos</span><span>Web</span><span>Procesos</span><span>Ayuda</span>
    </nav>
    <div class="toolbar">
      <i class="grip"></i>
      <b><svg><use href="#new"/></svg></b><b><svg><use href="#open"/></svg></b><b><svg><use href="#save"/></svg></b><b><svg><use href="#saveas"/></svg></b><b><svg><use href="#composer"/></svg></b><b><svg><use href="#manager"/></svg></b>
      <i class="grip"></i>
      <b class="pressed"><svg><use href="#touch"/></svg></b><b><svg><use href="#hand"/></svg></b><b><svg><use href="#pansel"/></svg></b><b><svg><use href="#zin"/></svg></b><b><svg><use href="#zout"/></svg></b><b><svg><use href="#z11"/></svg></b><b><svg><use href="#zfull"/></svg></b><b><svg><use href="#zsel"/></svg></b><b><svg><use href="#zlay"/></svg></b><b><svg><use href="#zlast"/></svg></b><b><svg><use href="#znext"/></svg></b><b><svg><use href="#booknew"/></svg></b><b><svg><use href="#book"/></svg></b><b><svg><use href="#refresh"/></svg></b>
      <i class="grip"></i>
      <b><svg><use href="#ident"/></svg></b><b><svg><use href="#ggear"/></svg></b><i class="dd dim"></i><b><svg><use href="#select"/></svg></b><i class="dd"></i><b><svg><use href="#epssel"/></svg></b><i class="dd"></i><b><svg><use href="#desel"/></svg></b><b><svg><use href="#attr"/></svg></b><b><svg><use href="#abacus"/></svg></b><b><svg><use href="#sigma"/></svg></b><b><svg><use href="#measure"/></svg></b><i class="dd"></i><b><svg><use href="#tip"/></svg></b><b><svg><use href="#textann"/></svg></b><i class="dd"></i>
      <i class="grip"></i>
      <b><svg><use href="#help"/></svg></b>
    </div>
    <div class="toolbar">
      <i class="grip"></i>
      <b class="tiny-dd"><svg><use href="#pencils"/></svg></b><b><svg><use href="#pencil"/></svg></b><b><svg><use href="#gsave"/></svg></b><b><svg><use href="#gpoly"/></svg></b><b><svg><use href="#gnode"/></svg></b><i class="dd dim"></i><b><svg><use href="#gmove"/></svg></b><b><svg><use href="#gedit"/></svg></b><b><svg><use href="#gtrash"/></svg></b><b><svg><use href="#gcut"/></svg></b><b><svg><use href="#gcopy"/></svg></b><b><svg><use href="#gpaste"/></svg></b>
      <i class="grip"></i>
      <b><svg><use href="#tag"/></svg></b><b><svg><use href="#pie"/></svg></b><b><svg><use href="#tagpin"/></svg></b><b><svg><use href="#gt-pin"/></svg></b><b><svg><use href="#gt-eye"/></svg></b><b><svg><use href="#gt-edit"/></svg></b><b><svg><use href="#gt-edit"/></svg></b><b><svg><use href="#gt-edit"/></svg></b>
      <i class="grip"></i>
      <b><svg><use href="#globeadd"/></svg></b><b class="pressed"><svg><use href="#globeadd"/></svg></b><b><svg><use href="#csw"/></svg></b>
      <i class="grip"></i>
      <b><svg><use href="#python"/></svg></b>
    </div>
    <div class="toolbar last">
      <i class="grip"></i><b><svg><use href="#qmap"/></svg></b>
    </div>

    <div class="workspace">
      <aside class="sidetools">
        <i class="hgrip"></i>
        <b><svg><use href="#vadd"/></svg></b>
        <b><svg><use href="#raster"/></svg></b>
        <b><svg><use href="#feather"/></svg></b>
        <b><svg><use href="#pg"/></svg><i class="dd"></i></b>
        <b><svg><use href="#wms"/></svg><i class="dd"></i></b>
        <b><svg><use href="#wcs"/></svg></b>
        <b><svg><use href="#wfs"/></svg><i class="dd"></i></b>
        <b><svg><use href="#comma"/></svg></b>
        <b><svg><use href="#virt"/></svg></b>
        <b><svg><use href="#vnew"/></svg><i class="dd"></i></b>
        <i class="hgrip end"></i>
      </aside>

      <section class="panels">
        <div class="ptitle"><i class="hgrip g61"></i><span>Panel del explorador</span></div>
        <div class="ptools"><svg><use href="#boxadd"/></svg><svg><use href="#refresh"/></svg><svg><use href="#funnel"/></svg><svg><use href="#collapse"/></svg><svg><use href="#info"/></svg></div>
        <ul class="tree">
          <li><i class="exp"></i><svg><use href="#folder"/></svg>Inicio</li>
          <li><i></i><svg><use href="#fav"/></svg>Favoritos</li>
          <li><i class="exp"></i><svg><use href="#folder"/></svg>C:/</li>
          <li><i></i><svg><use href="#db2"/></svg>DB2</li>
          <li><i></i><svg><use href="#mssql"/></svg>MSSQL</li>
          <li><i></i><svg><use href="#oracle"/></svg>Oracle</li>
        </ul>
        <i class="hdots"></i>
        <div class="ptitle marks"><i class="hgrip g18"></i><span>Panel de marcadores</span></div>
        <div class="ptools marks-tools"><svg><use href="#zbook"/></svg><svg><use href="#booknew"/></svg><svg><use href="#rtrash"/></svg><svg><use href="#share"/></svg><i class="mini"></i></div>
        <div class="marktable">
          <div class="mhead"><span>Nombre</span><span>Proyecto</span></div>
          <div class="mrow"><span>XL</span><span>Shape</span></div>
          <div class="mrow"><span>L</span><span>Shape</span></div>
          <div class="mrow"><span>M</span><span>Shape</span></div>
          <div class="mrow"><span>S</span><span>Shape</span></div>
          <div class="mrow"><span>S-team</span><span>180</span></div>
          <div class="hscroll"><i class="sb"></i><i class="thumb"></i></div>
        </div>
        <i class="hdots"></i>
        <div class="ptitle layers"><i class="hgrip g78"></i><span>Panel de capas</span></div>
        <div class="ptools layer-tools"><svg><use href="#brush3"/></svg><svg><use href="#addgrp"/></svg><svg><use href="#eye"/></svg><i class="mini"></i><svg><use href="#funnel"/></svg><svg><use href="#eps"/></svg></div>
        <div class="layerbox"><div class="layer"><i class="branch"></i><i class="check on"></i><i class="lsw"></i><strong>USOS_2016</strong></div></div>
      </section>

      <section class="canvas">
        <svg class="map" viewBox="170 180 1000 410" preserveAspectRatio="none">
          <path class="land" d="M180 180L172 332l60 72 12 54 104 10 16 20 16-18 36-6 30-38 62 8 42-40 14 14 66-55 90 104 40 44 26-6 50 20 28 36 76 24 80-8 50-12-16-14-34-4-6-30 14-66 58-86 54-154V180z"/>
          <g class="dense">
            <path d="M200 228v110M216 228v140M232 228v160M250 228v130M268 228v140M288 228v130M308 228v150M328 228v140M348 228v180M368 228v190M190 250h180M180 272h190M185 290h200M195 308h175M200 326h170M195 344h180M215 362h150"/>
            <path d="M440 228l30 40-20 40M450 270h40M430 228l60 60M460 228v90M480 240l-30 50"/>
            <path d="M610 240q60 100 130 60M600 228q40 120 150 80M640 230l60 80M660 228l70 70M630 260l90-30M640 290l100-50M650 240h90M645 256h90M655 272h80M670 300l60-20M690 228v80M710 228v80M730 228v70"/>
          </g>
          <path class="solid" d="M345 228h82l-4 50-20 14h-40zM640 228h100l-24 70-40 6-34-40zM196 228h100l-10 40-80 20zM440 268l44 10-20 40-26-20z"/>
          <path class="road" d="M230 425q80-20 140 2 60 20 80-40l90-55M240 432q80-14 136 6M380 420q90-60 100-100l60-20M270 455q0-70 110-85M335 410l6-50h44l-6 60zM500 437l34-92M508 437l32-96M480 228q50 70 70 120l26 52M500 228q54 60 80 170M540 228q20 70 80 120 70 0 130-30 90-20 264-90M590 228q30 90 160 90M590 350q60 4 160-14l140-32 110-50M520 270q40-60 30-40M680 410q40-90 120-90l90-20M695 415q30-70 60-80M730 376h80q-30 40-60 34zM760 345q40 20 40-20M880 310l-72 146-4 44M1060 235l-100 96-10 44-90 84-30 60M895 320q10 90 40 66l20-50q-30-22-60-16zM950 370q10 30 10 80l26 78 34-14M1028 292q40 10 40 0V228M1096 228l14 16 34-6M752 280l32 30M780 270l60-5 10-30M560 228q60 110 190 90"/>
        </svg>
      </section>

      <i class="vsplit"></i>
      <aside class="qms">
        <div class="qtitle"><i class="hgrip g43"></i><span>Search QMS</span><i class="hgrip g43"></i>
          <svg class="qbtn" viewBox="0 0 20 20"><path d="M4 9h8v7H4zM8 9V4h8v8h-4"/></svg>
          <svg class="qbtn" viewBox="0 0 20 20"><path d="M5 4l10 12M15 4L5 16"/></svg></div>
        <div class="field qsearch">Search string...</div>
        <div class="qrow"><div class="btn">Filter by extent</div><div class="combo"><span>All</span><i class="dd"></i></div></div>
        <div class="qlist"></div>
      </aside>
    </div>

    <footer class="status">
      <span class="s-msg">Alterna el estado de edición de la capa activa</span>
      <span>Coordenada</span><div class="field coord">406869,4471363</div>
      <svg class="s-sat"><use href="#sat"/></svg>
      <span>Escala</span><div class="combo white scale"><span>1:173.233</span><i class="dd"></i></div>
      <svg class="s-lock"><use href="#lock"/></svg>
      <span>Amplificador</span><div class="spin"><span>100%</span><i></i></div>
      <span class="s-rot">Rotación</span><div class="spin rot"><span>0,0</span><i></i></div>
      <i class="check on"></i><span class="s-rep">Representar</span>
      <svg class="s-crs"><use href="#crs"/></svg><span>EPSG:3042 (al vuelo)</span>
      <svg class="s-chat"><use href="#msg"/></svg>
    </footer>

    <footer class="taskbar">
      <div class="start"><svg><use href="#win"/></svg></div>
      <div class="search"><i class="cortana"></i><span>Escribe aquí para buscar</span><svg><use href="#mic"/></svg></div>
      <div class="tview"><svg><use href="#tview"/></svg></div>
      <div class="app run"><svg><use href="#fox"/></svg></div>
      <div class="app run"><svg><use href="#wa"/></svg><em>4</em></div>
      <div class="app"><span class="adobe ae">Ae</span></div>
      <div class="app"><span class="adobe ps">Ps</span></div>
      <div class="app run"><svg><use href="#exp"/></svg></div>
      <div class="app run"><svg><use href="#pdf"/></svg></div>
      <div class="app run"><svg><use href="#atom"/></svg></div>
      <div class="app run"><svg><use href="#gh"/></svg></div>
      <div class="app run"><span class="adobe ai">Ai</span></div>
      <div class="app run"><svg><use href="#mon"/></svg></div>
      <div class="app run active"><svg><use href="#qgis"/></svg></div>
      <div class="tray">
        <svg class="t-people"><use href="#people"/></svg><svg><use href="#chev"/></svg><svg><use href="#dbx"/></svg><svg><use href="#bat"/></svg><svg><use href="#vol"/></svg><svg class="t-wifi"><use href="#wifi"/></svg>
        <div class="t-lang"><span>ESP</span><span>ES</span></div>
        <div class="t-time"><span>12:42</span><span>03/07/2018</span></div>
        <div class="t-notif"><svg><use href="#notif"/></svg><em>1</em></div>
      </div>
    </footer>
  </div>

  <section class="dialog">
    <header class="dtitle"><svg class="i24"><use href="#qgis"/></svg><span>Propiedades de la capa - USOS_2016 | Estilo</span><span class="dq">?</span><svg class="dx" viewBox="0 0 16 16"><path d="M0 0l16 16M16 0L0 16"/></svg></header>
    <div class="dbody">
      <nav class="dnav">
        <a><svg><use href="#tools"/></svg>General</a>
        <a class="sel"><svg><use href="#style"/></svg>Estilo</a>
        <a><svg><use href="#tag"/></svg>Etiquetas</a>
        <a><svg><use href="#fields"/></svg>Campos</a>
        <a><svg><use href="#brush"/></svg>Representación</a>
        <a><svg><use href="#bubble"/></svg>Visualizar</a>
        <a><svg><use href="#actions"/></svg>Acciones</a>
        <a><svg><use href="#joins"/></svg>Uniones</a>
        <a><svg><use href="#diag"/></svg>Diagramas</a>
        <a><svg><use href="#info"/></svg>Metadatos</a>
        <a><svg class="n-eps"><use href="#eps"/></svg>Variables</a>
        <a><svg><use href="#legend"/></svg>Leyenda</a>
      </nav>
      <i class="dsplit"></i>
      <div class="dmain">
        <div class="combo cat"><svg><use href="#catg"/></svg><span>Categorizado</span><i class="dd"></i></div>
        <div class="frow r1"><label>Columna</label><div class="combo white col"><small>abc</small><span>USP_TX_DEN</span><i class="dd"></i></div><div class="btn ebtn">ε</div></div>
        <div class="frow r2"><label>Símbolo</label><div class="btn sym"><i class="osw"></i>Cambiar...</div></div>
        <div class="frow r3"><label>Rampa de color</label><div class="combo ramp"><span>Colores aleatorios</span><i class="dd"></i></div><div class="btn off">Editar</div><i class="check"></i><span>Invertir</span></div>
        <div class="grid">
          <div class="gbody">
            <div class="ghead"><span>Símbolo<svg viewBox="0 0 16 16"><path d="M15 1H1l8 14" fill="none" stroke="#aaa" stroke-width="1.5"/></svg></span><span>Valor</span><span>Leyenda</span></div>
            <div class="grow"><i class="check on"></i><i class="sw" style="background:#7dd79a"></i><span>DOTACIO...</span><span>DOTACIONAL</span></div>
            <div class="grow"><i class="check on"></i><i class="sw" style="background:#664be8"></i><span>DOTACIO...</span><span>DOTACIONAL ADMINISTRACIÓN PÚBLICA</span></div>
            <div class="grow"><i class="check on"></i><i class="sw" style="background:#8dcb79"></i><span>DOTACIO...</span><span>DOTACIONAL DEPORTIVO</span></div>
            <div class="grow"><i class="check on"></i><i class="sw" style="background:#d34ba7"></i><span>DOTACIO...</span><span>DOTACIONAL DEPORTIVO PRIVADO</span></div>
            <div class="grow"><i class="check on"></i><i class="sw" style="background:#34d334"></i><span>DOTACIO...</span><span>DOTACIONAL DEPORTIVO PÚBLICO</span></div>
            <div class="grow"><i class="check on"></i><i class="sw" style="background:#bfea4b"></i><span>DOTACIO...</span><span>DOTACIONAL DEPORTIVO PÚBLICO BÁSICO</span></div>
            <div class="grow"><i class="check on"></i><i class="sw" style="background:#9f62dd"></i><span>DOTACIO...</span><span>DOTACIONAL DEPORTIVO PÚBLICO SINGULAR</span></div>
            <div class="grow"><i class="check on"></i><i class="sw" style="background:#a060e0"></i><span>DOTACIO...</span><span>DOTACIONAL EQUIPAMIENTO</span></div>
            <div class="grow"><i class="check on"></i><i class="sw" style="background:#5aa9d3"></i><span>DOTACIO...</span><span>DOTACIONAL EQUIPAMIENTO PRIVADO</span></div>
            <div class="grow"><i class="check on"></i><i class="sw" style="background:#d5e577"></i><span>DOTACIO...</span><span>DOTACIONAL EQUIPAMIENTO PRIVADO BIENESTAR SOCIAL</span></div>
            <div class="grow"><i class="check on"></i><i class="sw" style="background:#e87be0"></i><span>DOTACIO...</span><span>DOTACIONAL EQUIPAMIENTO PRIVADO CULTURAL</span></div>
            <div class="grow"><i class="check on"></i><i class="sw" style="background:#40e8c8"></i><span>DOTACIO...</span><span>DOTACIONAL EQUIPAMIENTO PRIVADO EDUCATIVO</span></div>
            <div class="grow"><i class="check on"></i><i class="sw" style="background:#62dfd0"></i><span>DOTACIO...</span><span>DOTACIONAL EQUIPAMIENTO PRIVADO RELIGIOSO</span></div>
            <div class="grow"><i class="check on"></i><i class="sw" style="background:#d83cd0"></i><span>DOTACIO...</span><span>DOTACIONAL EQUIPAMIENTO PRIVADO SALUD</span></div>
            <div class="grow"><i class="check on"></i><i class="sw" style="background:#44d0ea"></i><span>DOTACIO...</span><span>DOTACIONAL EQUIPAMIENTO PÚBLICO</span></div>
            <div class="grow"><i class="check on"></i><i class="sw" style="background:#2140dd"></i><span>DOTACIO...</span><span>DOTACIONAL EQUIPAMIENTO PÚBLICO BÁSICO</span></div>
            <div class="grow"><i class="check on"></i><i class="sw" style="background:#66d8b4"></i><span>DOTACIO...</span><span>DOTACIONAL EQUIPAMIENTO PÚBLICO BIENESTAR SOCIAL</span></div>
            <div class="grow"><i class="check on"></i><i class="sw" style="background:#1f67c8"></i><span>DOTACIO...</span><span>DOTACIONAL EQUIPAMIENTO PÚBLICO BIENESTAR SOCIAL BÁSICO</span></div>
            <div class="grow"><i class="check on"></i><i class="sw" style="background:#5de8a5"></i><span>DOTACIO...</span><span>DOTACIONAL EQUIPAMIENTO PÚBLICO BIENESTAR SOCIAL SINGULAR</span></div>
            <div class="grow"><i class="check on"></i><i class="sw" style="background:#e54f50"></i><span>DOTACIO...</span><span>DOTACIONAL EQUIPAMIENTO PÚBLICO CULTURAL</span></div>
            <div class="grow"><i class="check on"></i><i class="sw" style="background:#e60fc8"></i><span>DOTACIO...</span><span>DOTACIONAL EQUIPAMIENTO PÚBLICO CULTURAL BÁSICO</span></div>
            <div class="grow"><i class="check on"></i><i class="sw" style="background:#8a2be6"></i><span>DOTACIO...</span><span>DOTACIONAL EQUIPAMIENTO PÚBLICO CULTURAL SINGULAR</span></div>
          </div>
          <div class="vscroll"><i class="sb up"></i><i class="thumb"></i><i class="fill"></i><i class="sb up"></i><i class="sb"></i></div>
        </div>
        <div class="brow">
          <div class="btn primary">Clasificar</div>
          <div class="btn sq"><svg viewBox="0 0 20 20"><path d="M7 1h6v6h6v6h-6v6H7v-6H1V7h6z" fill="#fff" stroke="#4f9150" stroke-width="1.5"/><path d="M10 4v12M4 10h12" stroke="#4f9150" stroke-width="2.2"/></svg></div>
          <div class="btn sq"><svg viewBox="0 0 20 20"><rect x="0" y="6" width="20" height="8" fill="#fff" stroke="#ef4a4a" stroke-width="1.5"/><path d="M2 10h16" stroke="#ef4a4a" stroke-width="3.4"/></svg></div>
          <div class="btn">Borrar todo</div>
          <div class="btn adv">Avanzado<i class="mini"></i></div>
        </div>
        <div class="rhead"><i class="tri"></i><strong>Renderizado de capas</strong><i class="rule"></i></div>
        <div class="orow o1"><label>Transparencia de capas</label>
          <div class="slider"><svg viewBox="0 0 17 23"><path d="M2 1h13l1 1v13l-7.500 7L1 15V2z"/><path d="M5 5h1M11 5h1"/></svg><i></i></div>
          <div class="spin small"><span>0</span><i></i></div></div>
        <div class="orow o2"><label>Modo de mezcla de capas</label><div class="combo blend"><span>Normal</span><i class="dd"></i></div></div>
        <div class="orow o2"><label>Modo de mezcla de objetos espaciales</label><div class="combo blend"><span>Normal</span><i class="dd"></i></div></div>
        <div class="orow o3"><i class="check"></i><span>Efectos de dibujo</span><div class="btn isq"><svg><use href="#gfav"/></svg></div></div>
        <div class="orow o4"><i class="check"></i><span class="order">Controlar orden de renderizado de objetos</span><div class="btn isq"><svg><use href="#gsort"/></svg></div></div>
        <div class="dfoot"><div class="btn est">Estilo<i class="mini"></i></div><div class="btn">Aceptar</div><div class="btn">Cancelar</div><div class="btn">Aplicar</div><div class="btn">Ayuda</div></div>
      </div>
    </div>
  </section>

  <div class="mark"></div>
  <svg class="arrow" viewBox="0 0 34 714"><path d="M17 4v710M2 20L17 3.500 32 20"/></svg>
  <p class="caption">NO OLVIDAR HACER CLICK EN ‘CLASIFICAR’ !!!</p>
</main>
</body>
</html>
```

FILE: styles.css
```css
* { box-sizing: border-box; }
html, body { margin: 0; }
body { background: #fff; }
i, em { font-style: normal; }
b { font-weight: normal; }
.defs { position: absolute; width: 0; height: 0; }

.sheet {
  position: relative;
  width: 3508px;
  height: 2480px;
  border: 2px solid #2b3a63;
  padding: 451px 352px 0;
  overflow: hidden;
  font: 16px/20px "DejaVu Sans Condensed", "DejaVu Sans", sans-serif;
  letter-spacing: -0.3px;
  color: #0a0a14;
  white-space: nowrap;
}
.screen { width: 2800px; height: 1575px; background: #efefef; display: flex; flex-direction: column; overflow: hidden; }
.i24 { width: 22px; height: 24px; }

/* window chrome */
.titlebar { height: 35px; flex: none; background: #fff; display: flex; align-items: center; padding: 0 0 2px 4px; gap: 8px; font: 16.5px/20px "Open Sans", sans-serif; letter-spacing: -0.6px; color: #8a8a8a; }
.wincontrols { margin-left: auto; display: flex; gap: 50px; padding-right: 29px; }
.wincontrols svg { width: 16px; height: 16px; fill: none; stroke: #888; stroke-width: 1.3; }
.menubar { height: 32px; flex: none; display: flex; align-items: center; padding: 3px 0 0 13px; gap: 22.3px; border-bottom: 2px solid #b9b9b9; }

.toolbar { height: 57px; flex: none; display: flex; align-items: center; border-top: 2px solid #f8f8f8; border-bottom: 2px solid #b9b9b9; padding-left: 8px; }
.toolbar.last { height: 55px; }
.toolbar b { width: 51px; height: 49px; flex: none; display: flex; align-items: center; justify-content: center; position: relative; }
.toolbar svg { width: 34px; height: 35px; overflow: visible; }
.toolbar .pressed { background: #d2d2d2; border: 2px solid #8c8c8c; border-radius: 4px; }
.grip { width: 21px; height: 44px; flex: none; background: radial-gradient(circle, #c4c4c4 1.8px, transparent 2px) 0 0 / 8px 8px; background-clip: content-box; padding-left: 13px; }
.toolbar > .grip:first-child { width: 9px; padding-left: 1px; }
.dd { width: 17px; flex: none; display: flex; justify-content: center; }
.dd::before { content: ""; border: 6.5px solid transparent; border-top: 8px solid #000; border-bottom: 0; }
.dd.dim::before { border-top-color: #999; }
.mini { border: 4px solid transparent; border-top: 5px solid #000; border-bottom: 0; }
.tiny-dd::after { content: ""; position: absolute; right: 5px; bottom: 4px; border: 4px solid transparent; border-top: 5px solid #777; border-bottom: 0; }

/* workspace */
.workspace { height: 1237px; flex: none; display: flex; }
.sidetools { width: 77px; border-right: 3px solid #bcbcbc; padding: 10px 0 0 7px; display: flex; flex-direction: column; }
.sidetools b { height: 49.6px; display: flex; align-items: center; padding: 0 0 0 5px; gap: 7px; }
.sidetools svg { width: 35px; height: 35px; overflow: visible; }
.hgrip { height: 8px; width: 61px; flex: none; background: radial-gradient(circle, #c6c6c6 1.8px, transparent 2px) 0 0 / 8px 8px; }
.hgrip.end { margin-top: 15px; }
.g43 { width: 43px; } .g18 { width: 18px; } .g78 { width: 78px; }

.panels { width: 330px; display: flex; flex-direction: column; flex: none; overflow: hidden; }
.ptitle { height: 20px; margin-top: 7px; padding-left: 4px; display: flex; align-items: center; gap: 17px; flex: none; }
.ptitle.marks { margin-top: 6px; gap: 26px; }
.ptitle.layers { margin-top: 5px; gap: 17px; }
.ptools { height: 30px; margin-top: 11px; padding-left: 10px; display: flex; align-items: center; gap: 16.5px; flex: none; }
.ptools svg { width: 23px; height: 23px; overflow: visible; }
.ptools .mini { margin: 20px -4px 0 -20.5px; }
.marks-tools { margin-top: 11px; }
.layer-tools { margin-top: 11px; }
.tree { list-style: none; margin: 10px 0 0; padding: 2px 0 0 7px; height: 135px; flex: none; background: #fff; border: 2px solid #bcbcbc; border-radius: 3px; overflow: hidden; }
.tree li { display: flex; align-items: center; height: 23.4px; }
.tree li > i { width: 28px; height: 13px; background: linear-gradient(#aaa, #aaa) 14px 6px / 8px 1px no-repeat; }
.tree li > .exp { background: linear-gradient(#666, #666) 3px 6px / 7px 1px no-repeat, linear-gradient(#666, #666) 6px 3px / 1px 7px no-repeat; position: relative; }
.tree li > .exp::before { content: ""; position: absolute; left: 0; top: 0; width: 13px; height: 13px; border: 1.5px solid #888; }
.tree svg { width: 24px; height: 23px; margin-right: 6px; }
.hdots { height: 6px; margin: 3px 0 0 110px; flex: none; background: radial-gradient(circle, #c6c6c6 1.8px, transparent 2px) 0 0 / 9px 6px; }
.marktable { margin-top: 8px; height: 429px; flex: none; background: #fff; border: 2px solid #bcbcbc; display: flex; flex-direction: column; }
.mhead, .mrow { display: grid; grid-template-columns: 147px 1fr; align-items: center; flex: none; }
.mhead { height: 32px; }
.mhead span { height: 31px; line-height: 30px; padding-left: 4px; border: 2px solid #8a8a8a; border-left-width: 1px; background: linear-gradient(#f4f4f4, #e6e6e6); }
.mrow { height: 19px; line-height: 19px; padding-left: 5px; }
.mrow:nth-child(odd) { background: #f4f4f4; }
.hscroll { margin-top: auto; height: 24px; display: flex; gap: 2px; background: repeating-conic-gradient(#e8e8e8 0 25%, #fff 0 50%) 0 0 / 4px 4px; }
.sb { width: 23px; height: 23px; flex: none; border: 2px solid #999; border-radius: 2px; background: linear-gradient(#fff, #eee); display: flex; align-items: center; justify-content: center; }
.hscroll .sb::before { content: ""; border: 5px solid transparent; border-right: 6px solid #000; border-left: 0; }
.hscroll .thumb { width: 68px; border: 1.5px solid #8a8a8a; background: radial-gradient(circle, #bbb 1.5px, transparent 1.6px) 19px 3px / 6px 6px, linear-gradient(#fbfbfb, #e0e0e0); background-clip: content-box, border-box; padding: 3px 20px; }
.layerbox { margin-top: 9px; flex: 1; margin-bottom: 2px; background: #fff; border: 2px solid #bcbcbc; border-radius: 0 0 4px 4px; }
.layer { height: 24px; background: #efefef; display: flex; align-items: center; padding-left: 15px; }
.branch { width: 14px; height: 12px; border: dotted #aaa; border-width: 0 0 1.5px 1.5px; margin: -8px 5px 0 0; }
.lsw { width: 23px; height: 23px; background: #99665b; border: 1px solid #5f4c48; margin: 0 9px; }
.layer strong { text-decoration: underline; text-underline-offset: 3px; letter-spacing: 0; }
.check { width: 18px; height: 18px; flex: none; background: #fff; border: 2px solid #c2c2c2; position: relative; }
.check.on::before, .check.on::after { content: ""; position: absolute; left: 5px; top: 0; width: 4px; height: 14px; background: #000; transform: rotate(40deg); }
.check.on::after { transform: rotate(-40deg); }

.canvas { width: 2138px; margin: 2px 0 2px 10px; background: #fff; border: 2px solid #bcbcbc; border-radius: 4px; position: relative; flex: none; overflow: hidden; }
.map { position: absolute; left: 1003px; top: 1067px; width: 446px; height: 137px; }
.map path { vector-effect: non-scaling-stroke; }
.land { fill: #db6027; stroke: #111; stroke-width: 1.5px; }
.dense path { fill: none; stroke: #120a04; stroke-width: 2px; }
.solid { fill: #1a0d05; opacity: .8; }
.road { fill: none; stroke: #1c1008; stroke-width: 1.5px; }
.vsplit { width: 10px; height: 398px; margin-top: 420px; flex: none; background: radial-gradient(circle, #c6c6c6 1.8px, transparent 2px) 0 0 / 10px 7.3px; }

.qms { width: 236px; display: flex; flex-direction: column; margin-left: -1px; }
.qtitle { height: 20px; margin-top: 6px; display: flex; align-items: center; gap: 3px; padding-left: 2px; }
.qtitle span { margin: 0 auto; letter-spacing: -0.7px; }
.qbtn { width: 19px; height: 19px; border: 2px solid #8a8a8a; border-radius: 3px; background: #f4f4f4; fill: none; stroke: #000; stroke-width: 2; }
.field { background: #fff; border: 2px solid #bcbcbc; border-top-color: #b0b0b0; border-radius: 3px; }
.qsearch { margin-top: 6px; height: 28px; line-height: 26px; padding-left: 4px; color: #777; }
.qrow { margin-top: 12px; height: 32px; display: flex; justify-content: space-between; }
.qrow .btn { width: 122px; height: 32px; }
.qrow .combo { width: 104px; height: 29px; margin-top: 1px; }
.qlist { margin: 10px 0 2px; flex: 1; background: #fff; border: 2px solid #bcbcbc; border-radius: 3px; }

/* form controls */
.btn { display: flex; align-items: center; justify-content: center; flex: none; border: 2px solid #b8b8b8; border-bottom-width: 3px; border-radius: 4px; background: linear-gradient(#fbfbfb, #dedede); padding-top: 2px; }
.combo { display: flex; align-items: center; flex: none; border: 2px solid #b8b8b8; border-bottom-width: 3px; border-radius: 4px; background: linear-gradient(#fafafa, #dcdcdc); padding-left: 5px; }
.combo > span { padding-top: 1px; }
.combo.white { background: #fff; }
.combo .dd { margin-left: auto; width: 23px; align-self: stretch; align-items: center; border-left: 1.5px solid #b8b8b8; }
.combo .dd::before { border-width: 7px 5.5px 0; }
.combo.white .dd { background: linear-gradient(#fafafa, #e4e4e4); }
.spin { display: flex; width: 111px; height: 30px; flex: none; background: #fff; border: 2px solid #b8b8b8; border-bottom-width: 3px; border-radius: 3px; align-items: center; padding-left: 6px; }
.spin i { margin-left: auto; width: 23px; align-self: stretch; border-left: 1.5px solid #b8b8b8; background: linear-gradient(#bbb, #bbb) 0 50% / 100% 1px no-repeat, #f2f2f2; display: flex; flex-direction: column; align-items: center; justify-content: space-around; }
.spin i::before { content: ""; border: 5px solid transparent; border-bottom: 5px solid #000; border-top: 0; }
.spin i::after { content: ""; border: 5px solid transparent; border-top: 5px solid #000; border-bottom: 0; }

/* status bar */
.status { height: 44px; flex: none; display: flex; align-items: center; padding-left: 8px; }
.s-msg { width: 1229px; }
.coord { width: 385px; height: 29px; margin-left: 7px; text-align: center; line-height: 27px; }
.status > span:nth-child(2) { width: 86px; }
.s-sat { width: 24px; height: 26px; margin: 0 20px 0 8px; }
.scale { width: 127px; height: 29px; margin-left: 6px; letter-spacing: -0.1px; }
.status > span:nth-child(5) { width: 44px; }
.s-lock { width: 20px; height: 24px; margin: 0 22px 0 10px; }
.status > span:nth-child(8) { width: 84px; letter-spacing: -0.6px; }
.status .spin { margin-left: 6px; }
.s-rot { margin-left: 12px; width: 62px; }
.status .spin.rot { margin-left: 15px; }
.status .check { margin-left: 9px; }
.s-rep { margin-left: 7px; width: 90px; }
.s-crs { width: 23px; height: 24px; margin: 0 5px 0 24px; }
.s-chat { width: 24px; height: 24px; margin: 0 22px 0 auto; }

/* taskbar */
.taskbar { height: 58px; flex: none; background: #352507; display: flex; color: #fff; font-family: "Open Sans", sans-serif; }
.start { width: 70px; display: flex; align-items: center; justify-content: center; }
.start svg { width: 25px; height: 25px; }
.search { width: 502px; background: #f0f0f0; border-top: 1px solid #bbb; display: flex; align-items: center; color: #333; font-size: 21px; letter-spacing: -0.3px; padding: 0 18px 0 14px; }
.search span { margin: 0 auto 0 14px; }
.search svg { width: 24px; height: 26px; }
.cortana { width: 31px; height: 31px; border: 4px solid #111; border-radius: 50%; }
.tview { width: 73px; display: flex; align-items: center; justify-content: center; padding-right: 8px; }
.tview svg { width: 26px; height: 24px; }
.app { width: 71.5px; flex: none; display: flex; align-items: center; justify-content: center; position: relative; }
.app svg { width: 33px; height: 33px; }
.app.run::after { content: ""; position: absolute; left: 7px; right: 7px; bottom: 0; height: 3px; background: #6cb6f0; }
.app.active { background: #5f5038; }
.app.active::after { left: 0; right: 0; }
.app em { position: absolute; left: 34px; top: 27px; width: 22px; height: 22px; border-radius: 50%; background: #f00c18; font-size: 16px; line-height: 22px; text-align: center; letter-spacing: 0; }
.adobe { width: 32px; height: 30px; margin-bottom: 4px; border: 2px solid; border-top-width: 3px; text-align: center; font: bold 16px/24px "Open Sans", sans-serif; letter-spacing: -0.5px; }
.ae { color: #c79bf5; background: #1b0a3c; } .ps { color: #7fc1f5; background: #0b1445; } .ai { color: #fb9b1c; background: #2b1600; }
.tray { margin-left: auto; display: flex; align-items: center; padding-right: 6px; font-size: 16px; letter-spacing: -0.6px; }
.tray svg { width: 20px; height: 22px; margin-right: 14.5px; }
.tray .t-people { width: 24px; height: 24px; margin-right: 30px; }
.tray .t-wifi { margin-left: 3px; }
.t-lang, .t-time { display: flex; flex-direction: column; align-items: center; line-height: 26px; }
.t-lang { width: 40px; margin-left: -2px; }
.t-time { width: 96px; margin-left: 10px; }
.t-notif { position: relative; width: 74px; border-right: 1.5px solid #8a7d66; height: 58px; padding: 14px 0 0 20px; }
.tray .t-notif svg { width: 26px; height: 26px; margin: 0; }
.t-notif em { position: absolute; left: 33px; top: 29px; width: 22px; height: 22px; border-radius: 50%; background: #3a3a3a; border: 1px solid #888; font-size: 15px; line-height: 20px; text-align: center; }

/* layer properties dialog */
.dialog { position: absolute; left: 604px; top: 614px; width: 2199px; height: 1161px; background: #efefef; border: 2px solid #1b72b8; box-shadow: 0 8px 34px rgba(0, 0, 0, .38); display: flex; flex-direction: column; }
.dtitle { height: 44px; flex: none; background: #fff; display: flex; align-items: center; padding: 0 25px 0 12px; font: 17px/20px "Open Sans", sans-serif; letter-spacing: -0.44px; color: #111; }
.dtitle span { margin-left: 8px; }
.dtitle .dq { margin-left: auto; font-size: 19px; }
.dx { width: 16px; height: 16px; fill: none; stroke: #111; stroke-width: 1.3; margin-left: 53px; }
.dbody { display: flex; flex: 1; }
.dnav { width: 219px; flex: none; background: #5d5d5d; color: #fff; padding-top: 1px; }
.dnav a { display: flex; align-items: center; gap: 9px; height: 49.65px; padding: 1px 0 0 7px; }
.dnav svg { width: 36px; height: 34px; overflow: visible; }
.dnav .n-eps { width: 30px; height: 30px; margin: 0 3px; }
.dnav .sel { background: #efefef; color: #0a0a14; gap: 14px; }
.dsplit { width: 6px; height: 364px; margin: 369px 2px 0 0; flex: none; background: radial-gradient(circle, #c6c6c6 1.8px, transparent 2px) 0 0 / 6px 7.3px; }
.dmain { width: 1965px; flex: none; }
.cat { height: 32px; margin-top: 4px; padding-left: 10px; }
.cat svg { width: 20px; height: 21px; margin-right: 4px; }
.frow { display: flex; padding-left: 12px; }
.frow label { width: 124px; padding-top: 2px; }
.r1 { height: 35px; margin-top: 24px; align-items: center; }
.col { width: 682px; height: 35px; padding-left: 6px; }
.col small { font-size: 13px; font-weight: bold; letter-spacing: -1px; margin-right: 4px; }
.ebtn { width: 35px; height: 35px; margin-left: 12px; padding: 0; font: 27px/20px "Liberation Serif", serif; }
.r2 { height: 36px; margin-top: 10px; align-items: center; }
.sym { width: 1816px; height: 36px; padding-right: 4px; }
.osw { width: 24px; height: 23px; margin-right: 5px; background: #db6027; border: 1px solid #4a2a1a; }
.r3 { height: 33px; margin-top: 15px; align-items: center; }
.ramp { width: 1589px; height: 32px; align-self: flex-start; }
.r3 .btn { width: 108px; height: 33px; margin: 0 15px 0 16px; border-color: #8c8c8c; border-width: 1.5px 2px 2px; }
.off { color: #888; }
.r3 .check { margin-right: 7px; }

.grid { margin: 14px 0 0 14px; width: 1938px; height: 538px; border: 2px solid #bcbcbc; background: #fff; display: flex; }
.gbody { flex: 1; overflow: hidden; }
.ghead { height: 31px; display: grid; grid-template-columns: 117px 93px 1fr; line-height: 27px; }
.ghead span { border: 2px solid #8c8c8c; border-width: 3px 1px 2px 1px; padding-left: 4px; background: linear-gradient(#f6f6f6, #e6e6e6); }
.ghead svg { width: 15px; height: 14px; margin-left: 32px; }
.grow { height: 23.35px; display: flex; align-items: center; letter-spacing: 0.06px; }
.grow .check { margin: 3px 8px 0 5px; }
.sw { width: 25px; height: 23.35px; border: 2px solid rgba(30, 20, 40, .55); border-width: 1px 1.5px 2px; margin-right: 64px; }
.grow span:nth-child(3) { width: 93px; letter-spacing: 0.25px; }
.vscroll { width: 24px; display: flex; flex-direction: column; background: repeating-conic-gradient(#e4e4e4 0 25%, #fff 0 50%) 0 0 / 4px 4px; gap: 1px; }
.vscroll .sb::before { content: ""; border: 5px solid transparent; border-top: 7px solid #000; border-bottom: 0; }
.vscroll .up::before { border-top: 0; border-bottom: 7px solid #000; }
.vscroll .thumb { height: 71px; width: 23px; border: 2px solid #8a8a8a; padding: 22px 3px 20px; background: radial-gradient(circle, #bbb 1.5px, transparent 1.6px) 0 0 / 5px 6px, linear-gradient(90deg, #fbfbfb, #dedede); background-clip: content-box, border-box; }
.fill { flex: 1; }

.brow { height: 38px; margin-top: 14px; padding: 0 13px; display: flex; align-items: center; }
.brow .btn { width: 109px; height: 35px; }
.brow .primary { background: linear-gradient(#d4e6f7, #e2e8ee 30%, #ccd8e4); border: 2px solid #6a6a70; box-shadow: inset 0 3px #6fb4ec, inset 0 -3px #3f8ed6; margin-right: 15px; }
.brow .sq { width: 44px; height: 38px; margin-right: 15px; }
.sq svg { width: 20px; height: 20px; }
.brow .adv { margin-left: auto; gap: 10px; padding-left: 2px; }
.btn .mini { margin-top: -4px; }
.rhead { height: 24px; margin-top: 31px; padding-left: 4px; display: flex; align-items: center; color: #333; }
.tri { border: 8px solid transparent; border-top: 11px solid #333; border-bottom: 0; margin-right: 11px; }
.rhead strong { width: 181px; font-size: 16.5px; letter-spacing: -0.15px; }
.rule { flex: 1; height: 1.5px; background: #888; margin: -8px 1px 0 10px; }
.orow { display: flex; align-items: center; }
.orow label { width: 492px; padding-top: 2px; }
.o1 { height: 28px; margin-top: 7px; }
.slider { width: 1391px; height: 23px; margin-right: 11px; display: flex; align-items: center; }
.slider svg { width: 17px; height: 23px; fill: #f6f6f6; stroke: #808080; stroke-width: 1.5; flex: none; }
.slider i { flex: 1; height: 6px; border: 1.5px solid #8a8a8a; border-top-width: 2px; border-left: 0; background: #e8e8e8; }
.spin.small { width: 65px; height: 28px; padding-left: 5px; }
.o2 { height: 28px; margin-top: 11px; }
.blend { width: 481px; height: 28px; padding-left: 4px; }
.o3 { height: 35px; margin-top: 11px; }
.o4 { height: 35px; margin-top: 10px; }
.order { letter-spacing: -0.2px; }
.orow .check { margin-right: 8px; }
.isq { width: 38px; height: 35px; margin-left: auto; margin-right: 5px; padding: 0; border-color: #a0a0a0; }
.isq svg { width: 22px; height: 22px; }
.dfoot { margin-top: 23px; display: flex; gap: 14.3px; }
.dfoot .btn { width: 109.5px; height: 33px; padding-right: 3px; }
.dfoot .est { margin-right: auto; gap: 28px; padding: 2px 0 0 16px; }

/* annotation */
.mark { position: absolute; left: 826px; top: 1405px; width: 143px; height: 61px; border: 4.5px solid #2b3a63; }
.arrow { position: absolute; left: 940px; top: 1472px; width: 34px; height: 714px; fill: none; stroke: #2b3a63; stroke-width: 4.5; }
.caption { position: absolute; left: 956px; top: 2206px; margin: 0; font: 48px/68px "Noto Sans", "Open Sans", sans-serif; letter-spacing: 0.6px; color: #2b3a63; }
```
